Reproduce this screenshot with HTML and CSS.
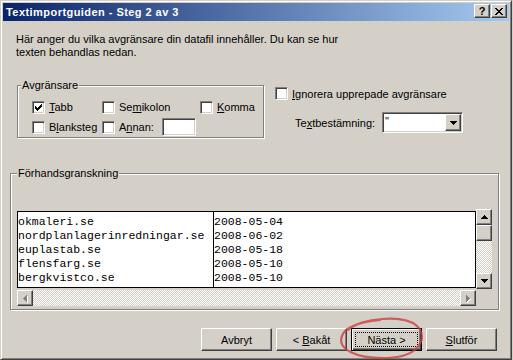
FILE: index.html
```html
<!DOCTYPE html>
<html lang="sv">
  <head>
    <meta charset="UTF-8" />
    <meta name="viewport" content="width=device-width, initial-scale=1.0" />
    <title>Textimportguiden - Steg 2 av 3</title>
    <link rel="stylesheet" href="styles.css">
  </head>
  <body>
    <div class="window">
      <div class="titlebar">
        <span class="title">Textimportguiden - Steg 2 av 3</span>
        <div class="caption-btns">
          <button class="cap-btn help">?</button>
          <button class="cap-btn">
            <svg width="8" height="7" viewBox="0 0 8 7"><path d="M0 0h2v1H0zM6 0h2v1H6zM1 1h2v1H1zM5 1h2v1H5zM2 2h4v1H2zM3 3h2v1H3zM2 4h4v1H2zM1 5h2v1H1zM5 5h2v1H5zM0 6h2v1H0zM6 6h2v1H6z"/></svg>
          </button>
        </div>
      </div>

      <div class="client">
        <p class="intro">Här anger du vilka avgränsare din datafil innehåller. Du kan se hur<br>texten behandlas nedan.</p>

        <div class="options">
          <div class="group delims">
            <div class="group-title">Avgränsare</div>
            <div class="delim-grid">
              <label class="check">
                <span class="box"><svg width="7" height="7" viewBox="0 0 7 7"><path d="M6 0h1v1H6zM5 1h2v1H5zM0 2h1v1H0zM4 2h3v1H4zM0 3h2v1H0zM3 3h3v1H3zM0 4h5v1H0zM1 5h3v1H1zM2 6h1v1H2z"/></svg></span>
                <span><u>T</u>abb</span>
              </label>
              <label class="check"><span class="box"></span><span>Se<u>m</u>ikolon</span></label>
              <label class="check"><span class="box"></span><span><u>K</u>omma</span></label>
              <label class="check"><span class="box"></span><span>B<u>l</u>anksteg</span></label>
              <label class="check">
                <span class="box"></span><span>A<u>n</u>nan:</span>
                <span class="field"></span>
              </label>
            </div>
          </div>

          <div class="side">
            <label class="check"><span class="box"></span><span><u>I</u>gnorera upprepade avgränsare</span></label>
            <div class="qualifier">
              <span class="qualifier-label">Te<u>x</u>tbestämning:</span>
              <div class="combo">
                <span class="combo-value">"</span>
                <span class="arrow-btn">
                  <svg width="7" height="4" viewBox="0 0 7 4"><path d="M0 0h7v1H0zM1 1h5v1H1zM2 2h3v1H2zM3 3h1v1H3z"/></svg>
                </span>
              </div>
            </div>
          </div>
        </div>

        <div class="group preview">
          <div class="group-title">Förhandsgranskning</div>
          <div class="preview-body">
            <div class="grid-col">
              <div class="grid">
                <div class="col names">
                  <div>okmaleri.se</div>
                  <div>nordplanlagerinredningar.se</div>
                  <div>euplastab.se</div>
                  <div>flensfarg.se</div>
                  <div>bergkvistco.se</div>
                </div>
                <div class="col dates">
                  <div>2008-05-04</div>
                  <div>2008-06-02</div>
                  <div>2008-05-18</div>
                  <div>2008-05-10</div>
                  <div>2008-05-10</div>
                </div>
              </div>
              <div class="hscroll">
                <span class="arrow-btn disabled">
                  <svg width="4" height="7" viewBox="0 0 4 7"><path d="M3 0h1v7H3zM2 1h1v5H2zM1 2h1v3H1zM0 3h1v1H0z"/></svg>
                </span>
                <span class="track"></span>
                <span class="arrow-btn disabled">
                  <svg width="4" height="7" viewBox="0 0 4 7"><path d="M0 0h1v7H0zM1 1h1v5H1zM2 2h1v3H2zM3 3h1v1H3z"/></svg>
                </span>
              </div>
            </div>
            <div class="vscroll">
              <span class="arrow-btn">
                <svg width="7" height="4" viewBox="0 0 7 4"><path d="M3 0h1v1H3zM2 1h3v1H2zM1 2h5v1H1zM0 3h7v1H0z"/></svg>
              </span>
              <span class="thumb"></span>
              <span class="track"></span>
              <span class="arrow-btn">
                <svg width="7" height="4" viewBox="0 0 7 4"><path d="M0 0h7v1H0zM1 1h5v1H1zM2 2h3v1H2zM3 3h1v1H3z"/></svg>
              </span>
            </div>
          </div>
        </div>

        <div class="buttons">
          <button class="btn">Avbryt</button>
          <button class="btn">&lt; <u>B</u>akåt</button>
          <button class="btn default">Nästa &gt;</button>
          <button class="btn"><u>S</u>lutför</button>
        </div>
      </div>

      <svg class="annotation" width="512" height="360" viewBox="0 0 512 360">
        <path d="M348 330 C 360 318, 404 314, 417 326 C 429 338, 419 357, 387 358 C 356 359, 337 349, 342 336 C 345 326, 360 322, 380 320" />
      </svg>
    </div>
  </body>
</html>
```

FILE: styles.css
```css
* {
  box-sizing: border-box;
  margin: 0;
  padding: 0;
}

body {
  width: 513px;
  height: 360px;
  overflow: hidden;
  background-color: #d4d0c8;
  font-family: "Liberation Sans", Arial, sans-serif;
  font-size: 11px;
  color: #000;
}

u {
  text-underline-offset: 1px;
}

.window {
  position: relative;
  display: flex;
  flex-direction: column;
  width: 512px;
  height: 360px;
  padding: 2px;
  border: 1px solid;
  border-color: #d4d0c8 #404040 #404040 #d4d0c8;
  box-shadow: inset 1px 1px #fff, inset -1px -1px #808080;
}

/* title bar */
.titlebar {
  display: flex;
  justify-content: space-between;
  align-items: flex-start;
  height: 18px;
  padding: 0 2px 0 3px;
  background: linear-gradient(to right, #0a246a, #a6caf0);
  color: #fff;
}

.title {
  font-weight: bold;
  line-height: 18px;
  letter-spacing: 0.45px;
}

.caption-btns {
  display: flex;
  gap: 1px;
  margin-top: 1px;
}

.cap-btn {
  display: flex;
  align-items: center;
  justify-content: center;
  width: 16px;
  height: 14px;
  background-color: #d4d0c8;
  border: 1px solid;
  border-color: #fff #404040 #404040 #fff;
  box-shadow: inset -1px -1px #808080;
  font-family: "Liberation Sans", Arial, sans-serif;
  font-size: 11px;
  font-weight: bold;
  line-height: 12px;
}

.cap-btn svg {
  display: block;
}

/* shared bevels */
.box,
.field,
.combo {
  background-color: #fff;
  border: 1px solid;
  border-color: #808080 #fff #fff #808080;
  box-shadow: inset 1px 1px #404040, inset -1px -1px #d4d0c8;
}

.arrow-btn,
.thumb,
.btn {
  background-color: #d4d0c8;
  border: 1px solid;
  border-color: #fff #404040 #404040 #fff;
  box-shadow: inset -1px -1px #808080;
}

.client {
  flex: 1;
  display: flex;
  flex-direction: column;
}

.intro {
  margin: 12px 0 0 13px;
  line-height: 13px;
}

/* group boxes */
.group {
  border: 1px solid #808080;
  box-shadow: inset 1px 1px #fff, 1px 1px #fff;
}

.group-title {
  width: max-content;
  margin: -7px 0 0 3px;
  padding: 0 1px;
  line-height: 13px;
  background-color: #d4d0c8;
}

.options {
  display: flex;
  margin: 26px 0 0 14px;
}

.delims {
  width: 247px;
  height: 53px;
}

.delim-grid {
  display: grid;
  grid-template-columns: 70px 98px auto;
  grid-auto-rows: 20px;
  margin: 5px 0 0 14px;
}

.check {
  display: flex;
  align-items: center;
  white-space: nowrap;
}

.box {
  flex: none;
  width: 13px;
  height: 13px;
  margin-right: 4px;
}

.box svg {
  display: block;
  margin: 2px 0 0 2px;
}

.field {
  width: 34px;
  height: 18px;
  margin-left: 8px;
}

.side {
  padding-left: 11px;
}

.side .check {
  height: 17px;
}

.qualifier {
  display: flex;
  align-items: center;
  margin: 10px 0 0 20px;
}

.qualifier-label {
  width: 87px;
}

.combo {
  display: flex;
  width: 81px;
  height: 21px;
  padding: 1px;
}

.combo-value {
  flex: 1;
  padding-left: 1px;
  line-height: 15px;
}

.arrow-btn {
  display: flex;
  align-items: center;
  justify-content: center;
  flex: none;
  width: 16px;
  height: 16px;
}

.combo .arrow-btn {
  height: 17px;
}

.arrow-btn.disabled svg {
  fill: #808080;
  filter: drop-shadow(1px 1px 0 #fff);
}

/* preview */
.preview {
  width: 489px;
  margin: 35px 0 0 7px;
  padding: 0 0 3px 6px;
}

.preview .group-title {
  margin-left: 0;
}

.preview-body {
  display: flex;
  align-items: flex-start;
  margin-top: 29px;
}

.grid-col {
  width: 459px;
  margin-top: 2px;
}

.grid {
  display: flex;
  height: 77px;
  background-color: #fff;
  border: 1px solid #000;
  font-family: "Liberation Mono", "Courier New", monospace;
  font-size: 11.5px;
  line-height: 14px;
}

.col {
  padding-top: 3px;
  white-space: nowrap;
}

.names {
  width: 196px;
  border-right: 1px solid #000;
}

.track {
  flex: 1;
  background: repeating-conic-gradient(#fff 0 25%, #d4d0c8 0 50%) 0 0 / 2px 2px;
}

.hscroll {
  display: flex;
  height: 16px;
  margin-top: 2px;
}

.vscroll {
  display: flex;
  flex-direction: column;
  width: 16px;
  height: 80px;
}

.thumb {
  height: 16px;
}

/* bottom buttons */
.buttons {
  display: flex;
  justify-content: flex-end;
  gap: 4px;
  margin-top: 18px;
  padding-right: 12px;
}

.btn {
  width: 71px;
  height: 23px;
  font-family: inherit;
  font-size: 11px;
  color: #000;
}

.btn.default {
  border-color: #000;
  box-shadow: inset 1px 1px #fff, inset -1px -1px #404040, inset -2px -2px #808080;
  outline: 1px dotted #000;
  outline-offset: -5px;
}

.annotation {
  position: absolute;
  top: -1px;
  left: -1px;
  pointer-events: none;
}

.annotation path {
  fill: none;
  stroke: #c8403f;
  stroke-opacity: 0.8;
  stroke-width: 2.2;
  stroke-linecap: round;
}
```
